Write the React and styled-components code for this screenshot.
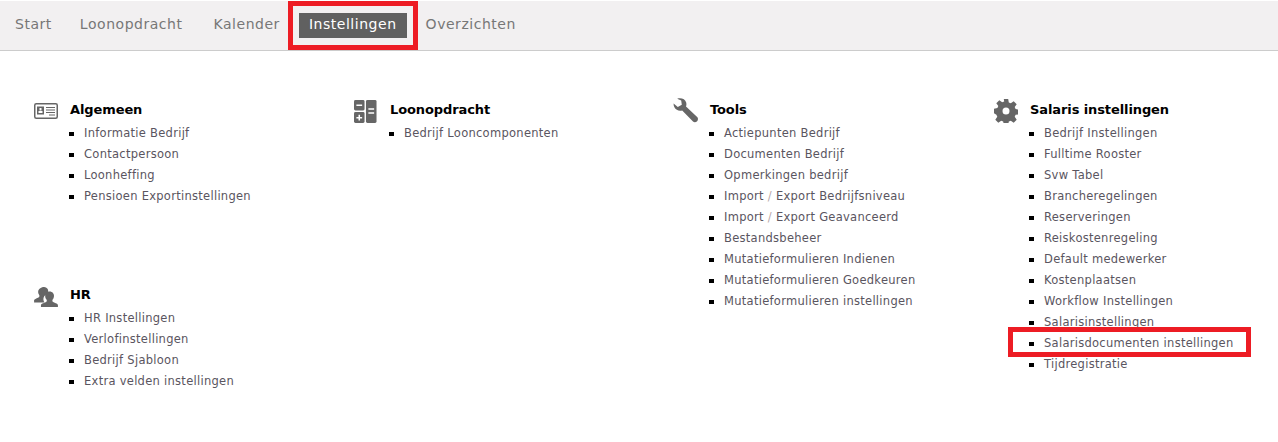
import styled, { createGlobalStyle } from "styled-components";

const GlobalStyle = createGlobalStyle`
  html, body {
    margin: 0;
    padding: 0;
    background: #fff;
  }
  body {
    font-family: "DejaVu Sans", Verdana, sans-serif;
    width: 1278px;
    height: 442px;
    overflow: hidden;
    position: relative;
  }
`;

const NavBar = styled.nav`
  display: flex;
  align-items: center;
  box-sizing: border-box;
  margin-top: 1px;
  height: 50px;
  padding-left: 5px;
  background: #f2f0f1;
  border-bottom: 1px solid #ccc;
`;

const NavItem = styled.a`
  display: block;
  padding: 2px 10px 5px;
  margin-top: -1px;
  margin-right: ${(props) => props.$gap ?? 10}px;
  font-size: 14px;
  line-height: 18px;
  letter-spacing: 0.53px;
  color: ${(props) => (props.$active ? "#fff" : "#777")};
  background: ${(props) => (props.$active ? "#606060" : "transparent")};
`;

const Columns = styled.div`
  display: grid;
  grid-template-columns: repeat(4, 320px);
  padding: 47px 0 0 33px;
`;

const Column = styled.div`
  display: flex;
  flex-direction: column;
`;

const Section = styled.section`
  display: grid;
  grid-template-columns: 37px 1fr;
  grid-template-rows: 25px auto;
  align-content: start;
  min-height: ${(props) => (props.$tall ? "185px" : "auto")};
`;

const IconSlot = styled.div`
  color: #666;
  height: 25px;
  display: flex;
  align-items: flex-start;
`;

const Title = styled.h3`
  margin: 0;
  font-size: 13px;
  line-height: 24px;
  font-weight: 700;
  letter-spacing: -0.1px;
  color: #000;
`;

const List = styled.ul`
  grid-column: 2;
  margin: 0;
  padding: 0 0 0 14px;
  list-style: none;
`;

const Item = styled.li`
  position: relative;
  font-size: 11.5px;
  line-height: 21px;
  letter-spacing: 0.28px;
  color: #5a5560;
  white-space: nowrap;
  &::before {
    content: "";
    position: absolute;
    left: -15px;
    top: 9px;
    width: 5px;
    height: 4px;
    background: #000;
  }
`;

const Slash = styled.span`
  color: #b9a9a9;
`;

const Highlight = styled.div`
  position: absolute;
  box-sizing: border-box;
  border: 5px solid #ed1c24;
  left: ${(props) => props.$x}px;
  top: ${(props) => props.$y}px;
  width: ${(props) => props.$w}px;
  height: ${(props) => props.$h}px;
`;

const Glyph = styled.svg`
  margin-top: ${(props) => props.$top ?? 0}px;
  margin-left: ${(props) => props.$left ?? 0}px;
`;

const IdCardIcon = () => (
  <Glyph $top={5} $left={1} width="24" height="16" viewBox="0 0 24 16">
    <rect x="0.75" y="0.75" width="22.5" height="14.5" rx="1.5" fill="none" stroke="currentColor" strokeWidth="1.5" />
    <rect x="3" y="3.5" width="7" height="8" fill="currentColor" />
    <rect x="5.5" y="5" width="2" height="2.5" fill="#fff" />
    <rect x="4.5" y="8" width="4" height="2" fill="#fff" />
    <path d="M12 4.5h9M12 7h9M12 9.5h9M15 12h6" stroke="currentColor" strokeWidth="1" />
  </Glyph>
);

const CalculatorIcon = () => (
  <Glyph $top={2} $left={1} width="23" height="23" viewBox="0 0 24 24">
    <rect x="0" y="0" width="11" height="11" rx="1.5" fill="currentColor" />
    <rect x="12.5" y="0" width="11" height="24" rx="1.5" fill="currentColor" />
    <rect x="0" y="12.5" width="11" height="11.5" rx="1.5" fill="currentColor" />
    <path d="M2.5 5.5h6M15 9.5h6M15 13.5h6M2.5 18.5h6M5.5 15.5v6" stroke="#fff" strokeWidth="1.6" />
  </Glyph>
);

const WrenchIcon = () => (
  <Glyph width="25" height="25" viewBox="0 0 25 25">
    <path
      d="M0.6 5.4 L4.8 9 L8.8 6.8 L8.2 2.6 L4.2 0.7 C8 -0.5 12.3 1 13.2 4.6 C13.6 6.2 13.4 7.4 13 8.4 L24.4 19.2 C25.3 20.3 25.1 22 24.1 23.2 C23 24.5 21.2 24.8 20 23.6 L9.2 12.4 C7.5 13 5.4 12.8 3.8 11.8 C1.6 10.4 0.4 8 0.6 5.4 Z"
      fill="currentColor"
    />
  </Glyph>
);

const CogIcon = () => (
  <Glyph $top={1} $left={1} width="24" height="24" viewBox="0 0 24 24">
    <path
      fillRule="evenodd"
      d="M9.8 0h4.4l.6 3.4 2 .8L19.7 2.2l3 3-2 2.9.9 2 3.4.7v4.4l-3.4.6-.9 2 2 2.9-3 3-2.9-2-2 .8-.6 3.4H9.8l-.6-3.4-2-.8-2.9 2-3-3 2-2.9-.9-2L0 14.2V9.8l3.4-.7.9-2-2-2.9 3-3 2.9 2 2-.8zM12 8.5a3.5 3.5 0 1 0 0 7 3.5 3.5 0 0 0 0-7z"
      fill="currentColor"
    />
  </Glyph>
);

const UsersIcon = () => (
  <Glyph $top={3} $left={1} width="24" height="22" viewBox="0 0 26 24">
    <path
      d="M11 1c3 0 4.6 2.4 4.4 5 -.1 1.3-.5 2.3-1 3 -3 .6-4.5 3.300-4.200 6 .1 1.200.6 2.200 1.200 3L0 18v-2.500c0-1.300 4.600-2.800 5.600-3.600.4-.9.300-1.700-.3-2.500C4.600 8.500 4.300 7 4.500 5.500 5 2.800 8 1 11 1z"
      fill="currentColor"
    />
    <path
      d="M17 6c3 0 5 2.400 4.700 5.200 -.2 1.500-.6 2.800-1.600 3.800-.3.800-.2 1.500.2 2.100 1.300.9 5.700 2 5.700 3.600V23H7.500v-2.300c0-1.600 4.800-2.700 6-3.600.5-.7.500-1.400.2-2.100-1-1-1.500-2.300-1.600-3.800C11.900 8.400 14 6 17 6z"
      fill="currentColor"
    />
  </Glyph>
);

const Block = ({ icon, title, items, tall }) => (
  <Section $tall={tall}>
    <IconSlot>{icon}</IconSlot>
    <Title>{title}</Title>
    <List>
      {items.map((item) => (
        <Item key={item}>
          {item.includes(" / ") ? (
            <>
              {item.split(" / ")[0]} <Slash>/</Slash> {item.split(" / ")[1]}
            </>
          ) : (
            item
          )}
        </Item>
      ))}
    </List>
  </Section>
);

export default function App() {
  return (
    <>
      <GlobalStyle />
      <NavBar>
        <NavItem $gap={8}>Start</NavItem>
        <NavItem $gap={11}>Loonopdracht</NavItem>
        <NavItem $gap={9}>Kalender</NavItem>
        <NavItem $active $gap={9}>
          Instellingen
        </NavItem>
        <NavItem>Overzichten</NavItem>
      </NavBar>
      <Columns>
        <Column>
          <Block
            tall
            icon={<IdCardIcon />}
            title="Algemeen"
            items={["Informatie Bedrijf", "Contactpersoon", "Loonheffing", "Pensioen Exportinstellingen"]}
          />
          <Block
            icon={<UsersIcon />}
            title="HR"
            items={["HR Instellingen", "Verlofinstellingen", "Bedrijf Sjabloon", "Extra velden instellingen"]}
          />
        </Column>
        <Column>
          <Block icon={<CalculatorIcon />} title="Loonopdracht" items={["Bedrijf Looncomponenten"]} />
        </Column>
        <Column>
          <Block
            icon={<WrenchIcon />}
            title="Tools"
            items={[
              "Actiepunten Bedrijf",
              "Documenten Bedrijf",
              "Opmerkingen bedrijf",
              "Import / Export Bedrijfsniveau",
              "Import / Export Geavanceerd",
              "Bestandsbeheer",
              "Mutatieformulieren Indienen",
              "Mutatieformulieren Goedkeuren",
              "Mutatieformulieren instellingen",
            ]}
          />
        </Column>
        <Column>
          <Block
            icon={<CogIcon />}
            title="Salaris instellingen"
            items={[
              "Bedrijf Instellingen",
              "Fulltime Rooster",
              "Svw Tabel",
              "Brancheregelingen",
              "Reserveringen",
              "Reiskostenregeling",
              "Default medewerker",
              "Kostenplaatsen",
              "Workflow Instellingen",
              "Salarisinstellingen",
              "Salarisdocumenten instellingen",
              "Tijdregistratie",
            ]}
          />
        </Column>
      </Columns>
      <Highlight $x={288} $y={1} $w={130} $h={49} />
      <Highlight $x={1008} $y={327} $w={243} $h={30} />
    </>
  );
}
